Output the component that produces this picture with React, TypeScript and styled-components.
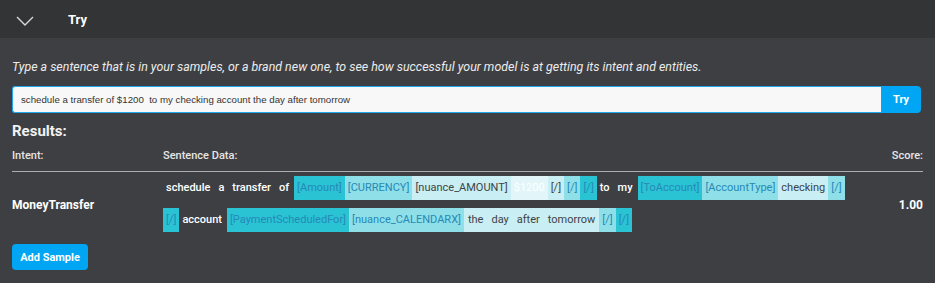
import React from "react";
import styled, { createGlobalStyle } from "styled-components";

const Global = createGlobalStyle`
  html, body { margin: 0; padding: 0; background: #3e3f43; }
  body { font-family: Roboto, "Noto Sans", sans-serif; color: #eeeeee; }
  * { box-sizing: border-box; }
`;

const Panel = styled.div`
  width: 935px;
  height: 283px;
  background: #3e3f43;
  overflow: hidden;
`;

const Header = styled.div`
  height: 38px;
  background: #333436;
  display: flex;
  align-items: center;
  padding-left: 16px;
`;

const Chevron = styled.svg`
  width: 18px;
  height: 10px;
  margin-top: 4px;
`;

const HeaderTitle = styled.div`
  margin-left: 34px;
  font-size: 13px;
  font-weight: 700;
  color: #ffffff;
`;

const Body = styled.div`
  padding: 21px 12px 0 12px;
  display: flex;
  flex-direction: column;
`;

const Description = styled.div`
  font-size: 12.4px;
  line-height: 16px;
  font-style: italic;
  color: #ececec;
`;

const InputRow = styled.div`
  margin-top: 11px;
  display: flex;
  height: 27px;
  width: 909px;
`;

const TextInput = styled.input`
  flex: 1;
  height: 27px;
  border: 1px solid #1ea7ec;
  border-right: none;
  border-radius: 3px 0 0 3px;
  background: #f8f8f8;
  padding: 0 8px;
  font-family: "Liberation Sans", Arial, sans-serif;
  font-size: 9.7px;
  color: #333;
  outline: none;
  white-space: pre;
`;

const TryButton = styled.button`
  width: 40px;
  height: 27px;
  border: none;
  border-radius: 0 4px 4px 0;
  background: #00a6f4;
  color: #fff;
  font-family: Roboto, sans-serif;
  font-weight: 700;
  font-size: 11px;
  padding: 0;
`;

const ResultsTitle = styled.div`
  margin-top: 9px;
  font-size: 15px;
  line-height: 18px;
  font-weight: 700;
  color: #f2f2f2;
`;

const Table = styled.div`
  display: grid;
  grid-template-columns: 151px 689px 71px;
  width: 911px;
`;

const HeadCell = styled.div<{ $right?: boolean }>`
  margin-top: 9px;
  font-size: 11px;
  line-height: 14px;
  font-weight: 500;
  color: #e6e6e6;
  padding-bottom: 8px;
  border-bottom: 1px solid #aeaeae;
  text-align: ${(p) => (p.$right ? "right" : "left")};
`;

const ValueCell = styled.div<{ $right?: boolean }>`
  display: flex;
  align-items: center;
  justify-content: ${(p) => (p.$right ? "flex-end" : "flex-start")};
  padding-top: 5px;
  font-size: 12px;
  font-weight: 700;
  color: #ffffff;
`;

const Sentence = styled.div`
  padding-top: 4px;
  display: flex;
  flex-wrap: wrap;
  row-gap: 8px;
  align-content: flex-start;
`;

const levelBg = ["transparent", "#29c3d4", "#8fdfe9", "#c9eef3", "#e2f6f9"];
const levelColor = ["#ffffff", "#2689b6", "#2689b6", "#3d4447", "#ffffff"];

const Token = styled.span<{ $level: number; $gap: boolean; $wide?: boolean }>`
  height: 24px;
  line-height: 24px;
  padding: 0 ${(p) => (p.$wide ? "4px" : "3px")};
  font-size: 11px;
  font-weight: ${(p) => (p.$level === 0 ? 500 : 400)};
  white-space: pre;
  margin-left: ${(p) => (p.$gap ? "2px" : "0")};
  background: ${(p) => levelBg[p.$level]};
  color: ${(p) => levelColor[p.$level]};
`;

const AddButton = styled.button`
  margin-top: 12px;
  align-self: flex-start;
  width: 76px;
  height: 26px;
  border: none;
  border-radius: 4px;
  background: #00a6f4;
  color: #fff;
  font-family: Roboto, sans-serif;
  font-size: 11px;
  font-weight: 700;
  padding: 0;
`;

type Tok = [string, number, boolean, boolean?];

const tokens: Tok[] = [
  ["schedule", 0, false],
  ["a", 0, true],
  ["transfer", 0, true],
  ["of", 0, true],
  ["[Amount]", 1, true],
  ["[CURRENCY]", 2, false],
  ["[nuance_AMOUNT]", 3, false],
  ["$1200", 4, false],
  ["[/]", 3, false],
  ["[/]", 2, false],
  ["[/]", 1, false],
  ["to", 0, false],
  ["my", 0, true],
  ["[ToAccount]", 1, true],
  ["[AccountType]", 2, false],
  ["checking", 3, false],
  ["[/]", 2, false],
  ["[/]", 1, false],
  ["account", 0, false],
  ["[PaymentScheduledFor]", 1, true],
  ["[nuance_CALENDARX]", 2, false],
  ["the", 3, false, true],
  ["day", 3, false, true],
  ["after", 3, false, true],
  ["tomorrow", 3, false, true],
  ["[/]", 2, false],
  ["[/]", 1, false],
];

export default function App() {
  return (
    <Panel>
      <Global />
      <Header>
        <Chevron viewBox="0 0 18 10">
          <polyline points="1,1 9,9 17,1" fill="none" stroke="#d8d8d8" strokeWidth="1.4" />
        </Chevron>
        <HeaderTitle>Try</HeaderTitle>
      </Header>
      <Body>
        <Description>
          Type a sentence that is in your samples, or a brand new one, to see how successful your model is at getting its intent and entities.
        </Description>
        <InputRow>
          <TextInput
            readOnly
            value="schedule a transfer of $1200  to my checking account the day after tomorrow"
          />
          <TryButton>Try</TryButton>
        </InputRow>
        <ResultsTitle>Results:</ResultsTitle>
        <Table>
          <HeadCell>Intent:</HeadCell>
          <HeadCell>Sentence Data:</HeadCell>
          <HeadCell $right>Score:</HeadCell>
          <ValueCell>MoneyTransfer</ValueCell>
          <Sentence>
            {tokens.map(([t, l, g, w], i) => (
              <Token key={i} $level={l} $gap={g} $wide={w}>
                {t}
              </Token>
            ))}
          </Sentence>
          <ValueCell $right>1.00</ValueCell>
        </Table>
        <AddButton>Add Sample</AddButton>
      </Body>
    </Panel>
  );
}
